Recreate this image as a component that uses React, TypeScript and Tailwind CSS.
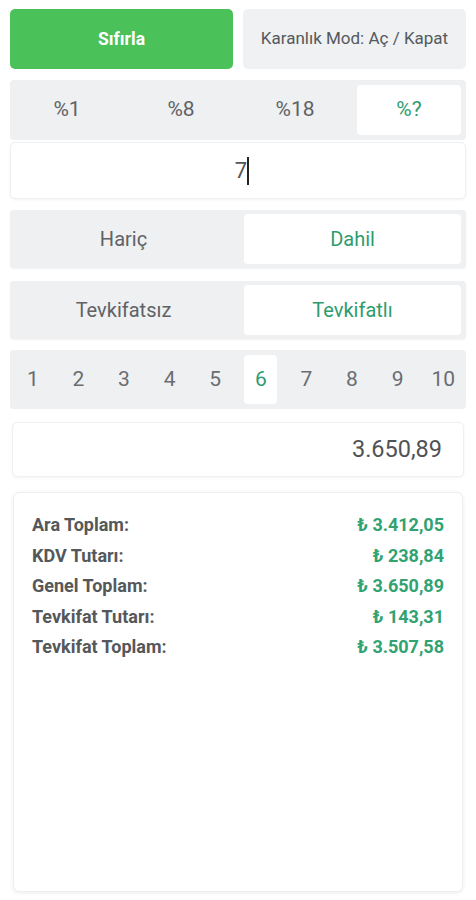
import React, { useState } from 'react';

const rates = ['%1', '%8', '%18', '%?'];
const parts = ['1', '2', '3', '4', '5', '6', '7', '8', '9', '10'];

const results = [
  { label: 'Ara Toplam:', value: '₺ 3.412,05' },
  { label: 'KDV Tutarı:', value: '₺ 238,84' },
  { label: 'Genel Toplam:', value: '₺ 3.650,89' },
  { label: 'Tevkifat Tutarı:', value: '₺ 143,31' },
  { label: 'Tevkifat Toplam:', value: '₺ 3.507,58' },
];

function Toggle({ options, active, onPick }: { options: string[]; active: string; onPick: (v: string) => void }) {
  return (
    <div className="grid grid-cols-2 gap-[12px] h-[58px] rounded-[4px] bg-[#eef0f1] px-[5px] py-[4px] shadow-[0_1px_2px_rgba(0,0,0,0.06)]">
      {options.map((o) => (
        <button
          key={o}
          onClick={() => onPick(o)}
          className={`rounded-[4px] text-[20px] ${
            active === o ? 'bg-white text-[#2e9c6e]' : 'text-[#5f6266]'
          }`}
        >
          {o}
        </button>
      ))}
    </div>
  );
}

export default function App() {
  const [rate, setRate] = useState('%?');
  const [vat, setVat] = useState('Dahil');
  const [withholding, setWithholding] = useState('Tevkifatlı');
  const [part, setPart] = useState('6');

  return (
    <div className="w-[476px] h-[900px] bg-white font-['Roboto',sans-serif] px-[10px] pt-[9px]">
      <div className="grid grid-cols-2 gap-[10px]">
        <button className="h-[60px] rounded-[5px] bg-[#4bc15a] text-white text-[17.5px] font-bold">Sıfırla</button>
        <button className="h-[60px] rounded-[5px] bg-[#eff1f2] text-[#55595e] text-[17px]">Karanlık Mod: Aç / Kapat</button>
      </div>

      <div className="mt-[11px] grid grid-cols-4 gap-[10px] h-[60px] rounded-[4px] bg-[#eef0f1] p-[5px]">
        {rates.map((r) => (
          <button
            key={r}
            onClick={() => setRate(r)}
            className={`rounded-[4px] text-[21px] ${
              rate === r ? 'bg-white text-[#2e9c6e]' : 'text-[#5f6266]'
            }`}
          >
            {r}
          </button>
        ))}
      </div>

      <div className="mt-[2px] h-[57px] rounded-[5px] bg-white border border-[#eef0f1] shadow-[0_1px_3px_rgba(0,0,0,0.05)] flex items-center justify-center">
        <span className="text-[22px] text-[#555] pl-[8px]">7</span>
        <span className="w-[2px] h-[28px] bg-[#222]"></span>
      </div>

      <div className="mt-[11px]">
        <Toggle options={['Hariç', 'Dahil']} active={vat} onPick={setVat} />
      </div>

      <div className="mt-[13px]">
        <Toggle options={['Tevkifatsız', 'Tevkifatlı']} active={withholding} onPick={setWithholding} />
      </div>

      <div className="mt-[11px] grid grid-cols-10 h-[59px] rounded-[4px] bg-[#eef0f1] py-[5px]">
        {parts.map((p) => (
          <div key={p} className="flex justify-center">
            <button
              onClick={() => setPart(p)}
              className={`w-[33px] rounded-[4px] text-[21px] ${
                part === p ? 'bg-white text-[#2e9c6e]' : 'text-[#6a6d71]'
              }`}
            >
              {p}
            </button>
          </div>
        ))}
      </div>

      <div className="mt-[13px] mx-[2px] h-[55px] rounded-[5px] bg-white border border-[#eef0f1] shadow-[0_1px_3px_rgba(0,0,0,0.05)] flex items-center justify-end pr-[21px]">
        <span className="text-[23.5px] text-[#505356]">3.650,89</span>
      </div>

      <div className="mt-[15px] mx-[3px] h-[400px] rounded-[6px] bg-white border border-[#eceeef] shadow-[0_1px_4px_rgba(0,0,0,0.07)] px-[18px] pt-[21px]">
        <div className="flex flex-col gap-[8px]">
          {results.map((r) => (
            <div key={r.label} className="flex justify-between text-[18px] font-bold leading-[22.5px]">
              <span className="text-[#55585b]">{r.label}</span>
              <span className="text-[#31a272]">{r.value}</span>
            </div>
          ))}
        </div>
      </div>
    </div>
  );
}
